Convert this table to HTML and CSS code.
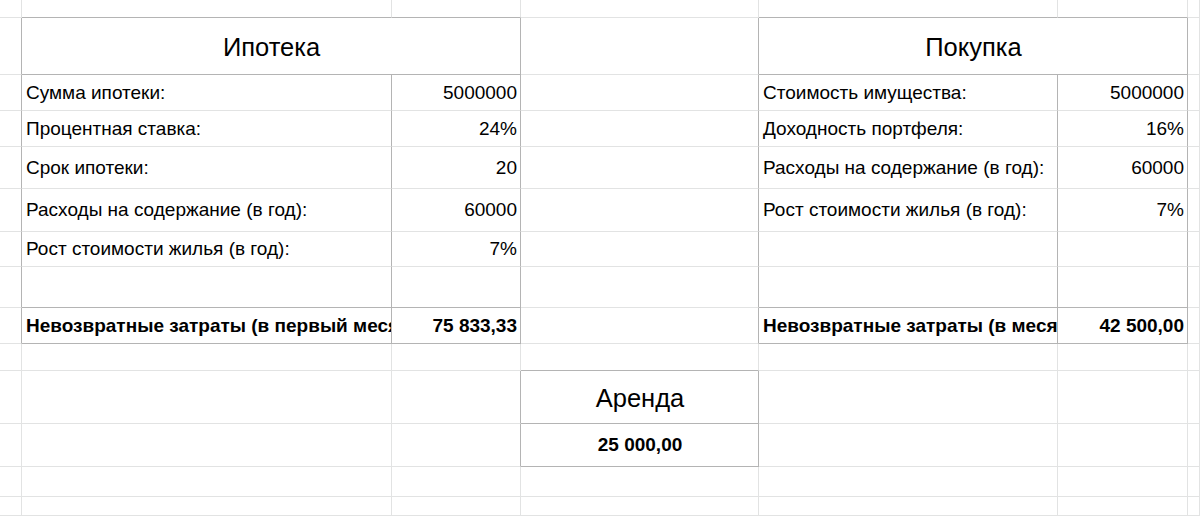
FILE: index.html
```html
<!DOCTYPE html>
<html lang="ru">
<head>
<meta charset="utf-8">
<title>Ипотека / Покупка / Аренда</title>
<link rel="stylesheet" href="styles.css">
</head>
<body>
<div class="sheet">
  <!-- row 1 -->
  <div class="c"></div>
  <div class="c db"></div>
  <div class="c db"></div>
  <div class="c"></div>
  <div class="c db"></div>
  <div class="c db"></div>
  <div class="c"></div>
  <!-- row 2 -->
  <div class="c dr"></div>
  <div class="c span2 dr db title">Ипотека</div>
  <div class="c dr"></div>
  <div class="c span2 dr db title">Покупка</div>
  <div class="c"></div>
  <!-- row 3 -->
  <div class="c dr"></div>
  <div class="c dr lbl">Сумма ипотеки:</div>
  <div class="c dr num">5000000</div>
  <div class="c dr"></div>
  <div class="c dr lbl">Стоимость имущества:</div>
  <div class="c dr num">5000000</div>
  <div class="c"></div>
  <!-- row 4 -->
  <div class="c dr"></div>
  <div class="c dr lbl">Процентная ставка:</div>
  <div class="c dr num">24%</div>
  <div class="c dr"></div>
  <div class="c dr lbl">Доходность портфеля:</div>
  <div class="c dr num">16%</div>
  <div class="c"></div>
  <!-- row 5 -->
  <div class="c dr"></div>
  <div class="c dr lbl">Срок ипотеки:</div>
  <div class="c dr num">20</div>
  <div class="c dr"></div>
  <div class="c dr lbl">Расходы на содержание (в год):</div>
  <div class="c dr num">60000</div>
  <div class="c"></div>
  <!-- row 6 -->
  <div class="c dr"></div>
  <div class="c dr lbl">Расходы на содержание (в год):</div>
  <div class="c dr num">60000</div>
  <div class="c dr"></div>
  <div class="c dr lbl">Рост стоимости жилья (в год):</div>
  <div class="c dr num">7%</div>
  <div class="c"></div>
  <!-- row 7 -->
  <div class="c dr"></div>
  <div class="c dr lbl">Рост стоимости жилья (в год):</div>
  <div class="c dr num">7%</div>
  <div class="c dr"></div>
  <div class="c dr"></div>
  <div class="c dr"></div>
  <div class="c"></div>
  <!-- row 8 -->
  <div class="c dr"></div>
  <div class="c dr db"></div>
  <div class="c dr db"></div>
  <div class="c dr"></div>
  <div class="c dr db"></div>
  <div class="c dr db"></div>
  <div class="c"></div>
  <!-- row 9 -->
  <div class="c dr"></div>
  <div class="c dr db lbl bold">Невозвратные затраты (в первый месяц)</div>
  <div class="c dr db num bold">75 833,33</div>
  <div class="c dr"></div>
  <div class="c dr db lbl bold">Невозвратные затраты (в месяц)</div>
  <div class="c dr db num bold">42 500,00</div>
  <div class="c"></div>
  <!-- row 10 -->
  <div class="c"></div>
  <div class="c"></div>
  <div class="c"></div>
  <div class="c db"></div>
  <div class="c"></div>
  <div class="c"></div>
  <div class="c"></div>
  <!-- row 11 -->
  <div class="c"></div>
  <div class="c"></div>
  <div class="c dr"></div>
  <div class="c dr db title">Аренда</div>
  <div class="c"></div>
  <div class="c"></div>
  <div class="c"></div>
  <!-- row 12 -->
  <div class="c"></div>
  <div class="c"></div>
  <div class="c dr"></div>
  <div class="c dr db center bold">25 000,00</div>
  <div class="c"></div>
  <div class="c"></div>
  <div class="c"></div>
  <!-- row 13 -->
  <div class="c"></div>
  <div class="c"></div>
  <div class="c"></div>
  <div class="c"></div>
  <div class="c"></div>
  <div class="c"></div>
  <div class="c"></div>
  <!-- row 14 -->
  <div class="c"></div>
  <div class="c"></div>
  <div class="c"></div>
  <div class="c"></div>
  <div class="c"></div>
  <div class="c"></div>
  <div class="c"></div>
</div>
</body>
</html>
```
FILE: styles.css
```css
html, body {
  margin: 0;
  padding: 0;
  background: #ffffff;
}

body {
  width: 1200px;
  height: 516px;
  overflow: hidden;
  font-family: "Liberation Sans", Arial, sans-serif;
  color: #000000;
}

.sheet {
  display: grid;
  grid-template-columns: 22px 370px 129px 238px 299px 130px 12px;
  grid-template-rows: 18px 57px 36px 36px 42px 43px 35px 41px 36px 27px 53px 43px 30px 19px;
  width: 1200px;
  height: 516px;
}

.c {
  box-sizing: border-box;
  border-right: 1px solid #e2e3e3;
  border-bottom: 1px solid #e2e3e3;
  display: flex;
  align-items: center;
  min-width: 0;
  overflow: hidden;
  white-space: nowrap;
  font-size: 19px;
  padding: 0 3px 0 4px;
}

.dr {
  border-right-color: #b4b4b4;
}

.db {
  border-bottom-color: #b4b4b4;
}

.span2 {
  grid-column: span 2;
}

.title {
  justify-content: center;
  font-size: 25.5px;
  padding-top: 2px;
}

.lbl {
  justify-content: flex-start;
}

.num {
  justify-content: flex-end;
}

.center {
  justify-content: center;
}

.bold {
  font-weight: bold;
}
```
